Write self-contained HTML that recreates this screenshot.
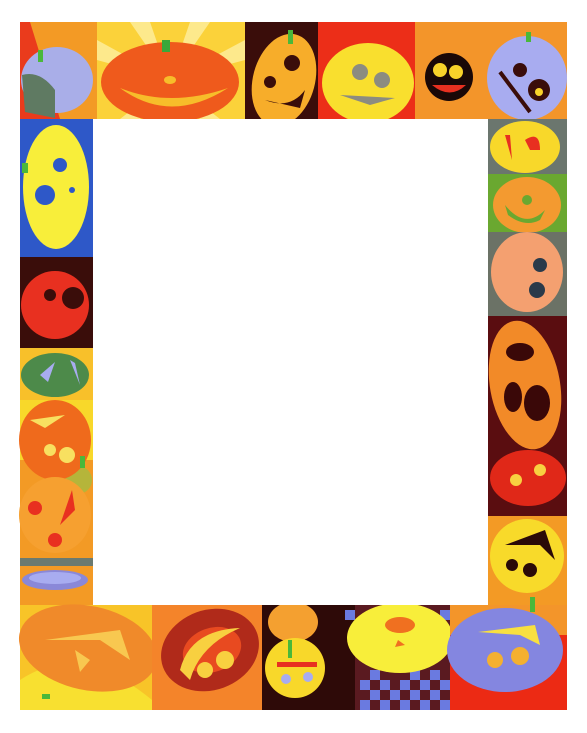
<!DOCTYPE html>
<html><head><style>html,body{margin:0;padding:0;background:#fff;width:587px;height:733px;overflow:hidden}svg{display:block}</style></head>
<body>
<svg width="587" height="733" viewBox="0 0 587 733" xmlns="http://www.w3.org/2000/svg">
<rect width="587" height="733" fill="#fff"/>
<!-- TOP ROW -->
<rect x="20" y="22" width="77" height="97" fill="#f39a25"/>
<polygon points="20,22 30,22 60,119 20,119" fill="#ea3b1c"/>
<rect x="97" y="22" width="148" height="97" fill="#fbd23a"/>
<g fill="#fff3b0" opacity="0.7"><polygon points="170,80 130,22 150,22"/><polygon points="170,80 190,22 210,22"/><polygon points="170,80 97,60 97,40"/><polygon points="170,80 245,40 245,60"/><polygon points="170,80 120,119 140,119"/><polygon points="170,80 200,119 220,119"/></g>
<rect x="245" y="22" width="73" height="97" fill="#3a0d0a"/>
<rect x="318" y="22" width="97" height="97" fill="#ec2e18"/>
<rect x="415" y="22" width="152" height="97" fill="#f3952a"/>
<ellipse cx="57" cy="80" rx="36" ry="33" fill="#a9aee8"/>
<path d="M22,75 Q40,70 55,90 L55,118 L25,112 Z" fill="#5f7a62"/>
<ellipse cx="170" cy="82" rx="69" ry="40" fill="#ef5a1c"/>
<path d="M120,88 Q170,125 228,88 Q170,108 120,88Z" fill="#f7bd2a"/>
<ellipse cx="170" cy="80" rx="6" ry="4" fill="#f7bd2a"/>
<rect x="162" y="40" width="8" height="12" fill="#3aa83a"/>
<ellipse cx="284" cy="80" rx="31" ry="47" transform="rotate(15 284 80)" fill="#f7ad2a"/>
<circle cx="292" cy="63" r="8" fill="#3a0d0a"/><circle cx="270" cy="82" r="6" fill="#3a0d0a"/>
<path d="M265,100 Q290,110 305,90 L300,108 Z" fill="#3a0d0a"/>
<ellipse cx="368" cy="83" rx="46" ry="40" fill="#f9df2e"/>
<path d="M340,95 L395,98 L370,105 Z" fill="#8c8c80"/><circle cx="360" cy="72" r="8" fill="#8c8c80"/><circle cx="382" cy="80" r="8" fill="#8c8c80"/>
<circle cx="449" cy="77" r="24" fill="#1a0807"/>
<circle cx="440" cy="70" r="7" fill="#f8d22a"/><circle cx="456" cy="72" r="7" fill="#f8d22a"/><path d="M432,85 Q450,100 466,85 Z" fill="#e83020"/>
<ellipse cx="527" cy="78" rx="40" ry="42" fill="#a8acf0"/>
<circle cx="520" cy="70" r="7" fill="#3a0d0a"/><circle cx="539" cy="90" r="11" fill="#3a0d0a"/><circle cx="539" cy="92" r="4" fill="#f8d22a"/>
<line x1="500" y1="72" x2="530" y2="112" stroke="#3a0d0a" stroke-width="4"/>
<!-- LEFT COLUMN -->
<rect x="20" y="119" width="73" height="138" fill="#2e58c8"/>
<ellipse cx="56" cy="187" rx="33" ry="62" fill="#f8ee3a"/>
<circle cx="60" cy="165" r="7" fill="#2e58c8"/><circle cx="45" cy="195" r="10" fill="#2e58c8"/><circle cx="72" cy="190" r="3" fill="#2e58c8"/>
<rect x="20" y="257" width="73" height="91" fill="#3a0d0a"/>
<ellipse cx="55" cy="305" rx="34" ry="34" fill="#e83020"/>
<circle cx="73" cy="298" r="11" fill="#3a0d0a"/><circle cx="50" cy="295" r="6" fill="#3a0d0a"/>
<rect x="20" y="348" width="73" height="52" fill="#f8c02a"/>
<ellipse cx="55" cy="375" rx="34" ry="22" fill="#4d8a4a"/>
<path d="M40,375 L55,362 L48,382Z M70,360 L80,385 L75,363Z" fill="#a8acf0"/>
<rect x="20" y="400" width="73" height="205" fill="#f39a25"/>
<rect x="20" y="400" width="73" height="60" fill="#f8d82a"/>
<circle cx="78" cy="480" r="14" fill="#8cc84a" opacity="0.6"/>
<ellipse cx="55" cy="440" rx="36" ry="40" fill="#ef6a1c"/>
<circle cx="50" cy="450" r="6" fill="#f8e060"/><circle cx="67" cy="455" r="8" fill="#f8e060"/><path d="M30,420 L65,415 L45,428Z" fill="#f8e060"/>
<ellipse cx="55" cy="515" rx="36" ry="38" fill="#f6a030"/>
<path d="M72,490 L60,525 L75,510Z" fill="#e83020"/><circle cx="35" cy="508" r="7" fill="#e83020"/><circle cx="55" cy="540" r="7" fill="#e83020"/>
<rect x="20" y="558" width="73" height="8" fill="#6b7a70"/>
<ellipse cx="55" cy="580" rx="33" ry="10" fill="#8a88d8"/>
<ellipse cx="55" cy="578" rx="26" ry="6" fill="#a8acf0"/>
<!-- RIGHT COLUMN -->
<rect x="488" y="119" width="79" height="55" fill="#6b766e"/>
<ellipse cx="525" cy="147" rx="35" ry="26" fill="#f8d82a"/>
<path d="M505,135 L512,160 L510,135Z M525,140 Q540,130 540,150 L530,150Z" fill="#e83020"/>
<rect x="488" y="174" width="79" height="58" fill="#6aa830"/>
<ellipse cx="527" cy="205" rx="34" ry="28" fill="#f39a30"/>
<path d="M505,205 Q525,230 545,210 L540,220 Q525,228 508,215Z" fill="#6aa830"/><circle cx="527" cy="200" r="5" fill="#6aa830"/>
<rect x="488" y="232" width="79" height="84" fill="#6b7266"/>
<ellipse cx="527" cy="272" rx="36" ry="40" fill="#f4a070"/>
<circle cx="540" cy="265" r="7" fill="#2a3a4a"/><circle cx="537" cy="290" r="8" fill="#2a3a4a"/>
<rect x="488" y="316" width="79" height="200" fill="#5a0d10"/>
<ellipse cx="525" cy="385" rx="35" ry="65" transform="rotate(-10 525 385)" fill="#f28a28"/>
<ellipse cx="520" cy="352" rx="14" ry="9" fill="#3a0808"/><ellipse cx="513" cy="397" rx="9" ry="15" fill="#3a0808"/><ellipse cx="537" cy="403" rx="13" ry="18" fill="#3a0808"/>
<ellipse cx="528" cy="478" rx="38" ry="28" fill="#e02818"/>
<circle cx="516" cy="480" r="6" fill="#f8d040"/><circle cx="540" cy="470" r="6" fill="#f8d040"/>
<rect x="488" y="516" width="79" height="89" fill="#f39a25"/>
<circle cx="527" cy="556" r="37" fill="#f8da2a"/>
<path d="M505,545 L545,530 L555,560 L540,545Z" fill="#2a0a08"/><circle cx="512" cy="565" r="6" fill="#2a0a08"/><circle cx="530" cy="570" r="7" fill="#2a0a08"/>
<!-- BOTTOM ROW -->
<rect x="20" y="605" width="132" height="105" fill="#f8c428"/>
<path d="M20,680 Q80,640 152,700 L152,710 L20,710Z" fill="#f8e030"/>
<ellipse cx="88" cy="648" rx="70" ry="42" transform="rotate(12 88 648)" fill="#f08a2a"/>
<path d="M45,640 L120,630 L130,660 L100,640 Z" fill="#f8c850"/><polygon points="75,650 80,672 90,660" fill="#f8c850"/>
<rect x="152" y="605" width="110" height="105" fill="#f4842a"/>
<ellipse cx="210" cy="650" rx="50" ry="40" transform="rotate(-20 210 650)" fill="#b02a1a"/>
<ellipse cx="212" cy="650" rx="30" ry="22" transform="rotate(-20 212 650)" fill="#e84a20"/>
<path d="M180,670 Q190,630 240,628 Q200,645 190,680Z" fill="#f8d040"/><circle cx="225" cy="660" r="9" fill="#f8d040"/><circle cx="205" cy="670" r="8" fill="#f8d040"/>
<rect x="262" y="605" width="93" height="105" fill="#2e0a08"/>
<ellipse cx="293" cy="622" rx="25" ry="20" fill="#f4a030"/>
<circle cx="295" cy="668" r="30" fill="#f8d82a"/>
<rect x="277" y="662" width="40" height="5" fill="#e83020"/>
<circle cx="286" cy="679" r="5" fill="#a8acf0"/><circle cx="308" cy="677" r="5" fill="#a8acf0"/>
<rect x="355" y="605" width="95" height="105" fill="#5a1a20"/>
<g fill="#6a7ae0">
<rect x="360" y="680" width="10" height="10"/><rect x="380" y="680" width="10" height="10"/><rect x="400" y="680" width="10" height="10"/><rect x="420" y="680" width="10" height="10"/><rect x="440" y="680" width="10" height="10"/>
<rect x="370" y="690" width="10" height="10"/><rect x="390" y="690" width="10" height="10"/><rect x="410" y="690" width="10" height="10"/><rect x="430" y="690" width="10" height="10"/>
<rect x="360" y="700" width="10" height="10"/><rect x="380" y="700" width="10" height="10"/><rect x="400" y="700" width="10" height="10"/><rect x="420" y="700" width="10" height="10"/><rect x="440" y="700" width="10" height="10"/>
<rect x="370" y="670" width="10" height="10"/><rect x="410" y="670" width="10" height="10"/><rect x="430" y="670" width="10" height="10"/>
<rect x="345" y="610" width="10" height="10"/><rect x="440" y="610" width="10" height="10"/><rect x="430" y="620" width="10" height="10"/>
</g>
<ellipse cx="400" cy="638" rx="53" ry="35" fill="#f8ee3a"/>
<ellipse cx="400" cy="625" rx="15" ry="8" fill="#f07020"/><polygon points="398,640 405,645 395,647" fill="#f07020"/>
<rect x="450" y="605" width="117" height="105" fill="#ec2a14"/>
<rect x="450" y="605" width="117" height="30" fill="#f3952a"/>
<ellipse cx="505" cy="650" rx="58" ry="42" fill="#8486e0"/>
<path d="M478,632 L535,625 L540,645 L520,635 Z" fill="#f8e040"/>
<circle cx="520" cy="656" r="9" fill="#f4b030"/><circle cx="495" cy="660" r="8" fill="#f4b030"/>
<!-- stems -->
<g fill="#4ab83a"><rect x="38" y="50" width="5" height="12"/><rect x="288" y="30" width="5" height="14"/><rect x="526" y="32" width="5" height="10"/><rect x="22" y="163" width="6" height="10"/><rect x="80" y="456" width="5" height="12"/><rect x="288" y="640" width="4" height="18"/><rect x="530" y="597" width="5" height="15"/><rect x="42" y="694" width="8" height="5"/></g>
<!-- inner white -->
<rect x="93" y="119" width="395" height="486" fill="#fff"/>
</svg>
</body></html>
